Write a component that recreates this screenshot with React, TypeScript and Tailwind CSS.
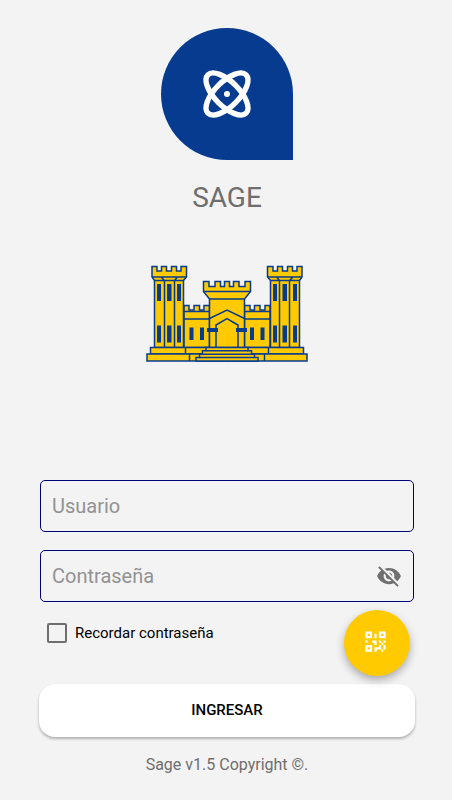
import React, { useState } from 'react';
import { MdVisibility, MdVisibilityOff } from 'react-icons/md';

function AtomIcon() {
  return (
    <svg viewBox="0 0 24 24" className="size-14" fill="none" stroke="white" strokeWidth="2.300" aria-hidden="true">
      <circle cx="12" cy="12" r="1.300" fill="white" stroke="none" />
      <path d="M20.2 20.2c2.04-2.03.02-7.36-4.5-11.9-4.54-4.52-9.87-6.54-11.9-4.5-2.04 2.03-.02 7.36 4.5 11.9 4.54 4.52 9.87 6.54 11.9 4.5Z" />
      <path d="M15.7 15.7c4.52-4.54 6.54-9.87 4.5-11.9-2.03-2.04-7.36-.02-11.9 4.5-4.52 4.54-6.54 9.87-4.5 11.9 2.03 2.04 7.36.02 11.9-4.5Z" />
    </svg>
  );
}

function QrIcon() {
  return (
    <svg viewBox="0 0 24 24" className="size-[27px]" fill="currentColor" aria-hidden="true">
      <path d="M3,11H5V13H3V11M11,5H13V9H11V5M9,11H13V15H11V13H9V11M15,11H17V13H19V11H21V13H19V15H21V19H19V21H17V19H13V21H11V17H15V15H17V13H15V11M19,19V15H17V19H19M15,3H21V9H15V3M17,5V7H19V5H17M3,3H9V9H3V3M5,5V7H7V5H5M3,15H9V21H3V15M5,17V19H7V17H5Z" />
    </svg>
  );
}

/* One wing of the castle: tower, wall and plinth. The other wing is its mirror image. */
function Wing() {
  return (
    <g>
      <path d="M39 47v-5.500h5v4.500h5v-4.500h5.500v4.500h4.500v-4.500h5.500v42h-25.500z" />
      <path d="M39 47.500h25M39 55h25" />
      <path d="M7 2.500h5v4.500h4.500v-4.500h5v4.500h5v-4.500h5v4.500h4.500v-4.500h5.500v10.500l-3 3.500v67h-29v-67l-2.500-3.500z" />
      <path d="M7 13h34.500M9.500 16.500h29.500M16.500 13.500l3 3v67M32 13.500l-2.500 3v67" />
      <path d="M5.500 83.500h35v6.500h-35zM40.500 83.500h41.500v6.500h-41.500z" />
      <path d="M2 90h42.500v7h-42.500zM44.500 90h37.500v7h-37.500z" />
      <g fill="#063b8f" stroke="none">
        <path d="M12 20h4v17h-4zM22 20h4.500v17h-4.500zM32 20h4v17h-4z" />
        <path d="M12 61.500h4v17h-4zM22 61.500h4.500v17h-4.500zM32 61.500h4v17h-4z" />
        <path d="M44.500 63.500h4v12.500h-4zM55 63.500h4v12.500h-4z" />
      </g>
    </g>
  );
}

function Castle() {
  return (
    <svg viewBox="0 0 164 99" className="w-[164px]" fill="#ffcb00" stroke="#063b8f" strokeWidth="1.500" role="img" aria-label="Castillo">
      <Wing />
      <g transform="translate(164 0) scale(-1 1)">
        <Wing />
      </g>
      <path d="M58.500 17.500h5.500v5h6v-5h5.500v5h4v-5h5v5h4v-5h5.500v5h6v-5h5.500v10l-6 7.500v48.500h-35v-48.500l-6-7.500z" />
      <path d="M58.500 27.500h47M64.500 35h35M64.500 54.500l17.500-8.500 17.500 8.500M71 83.500v-22.500l11-6.500 11 6.500v22.500" fill="none" />
      <path d="M62 64h11v4h-11zM91 64h11v4h-11z" fill="#063b8f" stroke="none" />
      <path d="M61 83.500h42v3.300h3.500v3.400h3v3.300h3.500v3.500h-62v-3.500h3.500v-3.300h3v-3.400h3.500z" />
      <path d="M61 86.800h42M57.500 90.200h49M54.500 93.500h55" />
    </svg>
  );
}

const fieldClass =
  'h-[52px] w-full rounded-[5px] border border-[#00007a] bg-transparent pl-[11px] text-xl text-black outline-none placeholder:text-[#929292]';

export default function App() {
  const [visible, setVisible] = useState(false);

  return (
    <main className="flex min-h-screen flex-col items-center bg-[#f3f3f3] pt-7 pr-[37px] pb-5 pl-[39px] font-[Roboto,sans-serif]">
      <div className="flex size-[132px] items-center justify-center rounded-full rounded-br-none bg-[#063b8f]">
        <AtomIcon />
      </div>
      <h1 className="mt-[18px] text-[28px] leading-10 text-[#6e6e6e]">SAGE</h1>
      <div className="mt-[46px]">
        <Castle />
      </div>

      <form className="mt-[117px] flex w-full flex-col" onSubmit={(e) => e.preventDefault()}>
        <div className="flex flex-col gap-[18px] px-px">
          <input type="text" aria-label="Usuario" placeholder="Usuario" className={`${fieldClass} pr-3`} />
          <div className="relative">
            <input
              type={visible ? 'text' : 'password'}
              aria-label="Contraseña"
              placeholder="Contraseña"
              className={`${fieldClass} pr-12`}
            />
            <button
              type="button"
              aria-label="Mostrar contraseña"
              onClick={() => setVisible(!visible)}
              className="absolute inset-y-0 right-3 flex items-center text-[#707070]"
            >
              {visible ? <MdVisibility size={26} /> : <MdVisibilityOff size={26} />}
            </button>
          </div>
        </div>

        <div className="z-10 mt-2 flex items-start justify-between pr-[5px] pl-2">
          <label className="flex items-center gap-2 pt-[11px] text-[15px] leading-6 text-black">
            <input
              type="checkbox"
              className="size-5 appearance-none rounded-[2px] border-2 border-[#6e6e6e] checked:bg-[#063b8f]"
            />
            Recordar contraseña
          </label>
          <button
            type="button"
            aria-label="Escanear código QR"
            className="flex size-[66px] items-center justify-center rounded-full bg-[#ffcb00] pr-1 pb-1 text-white shadow-[0_4px_8px_rgba(0,0,0,0.3)]"
          >
            <QrIcon />
          </button>
        </div>

        <button
          type="submit"
          className="mt-2 h-[53px] w-full rounded-2xl bg-white text-[15px] font-medium text-black shadow-[0_2px_3px_rgba(0,0,0,0.28)]"
        >
          INGRESAR
        </button>
      </form>

      <footer className="mt-4 text-base leading-6 text-[#6e6e6e]">Sage v1.5 Copyright ©.</footer>
    </main>
  );
}
